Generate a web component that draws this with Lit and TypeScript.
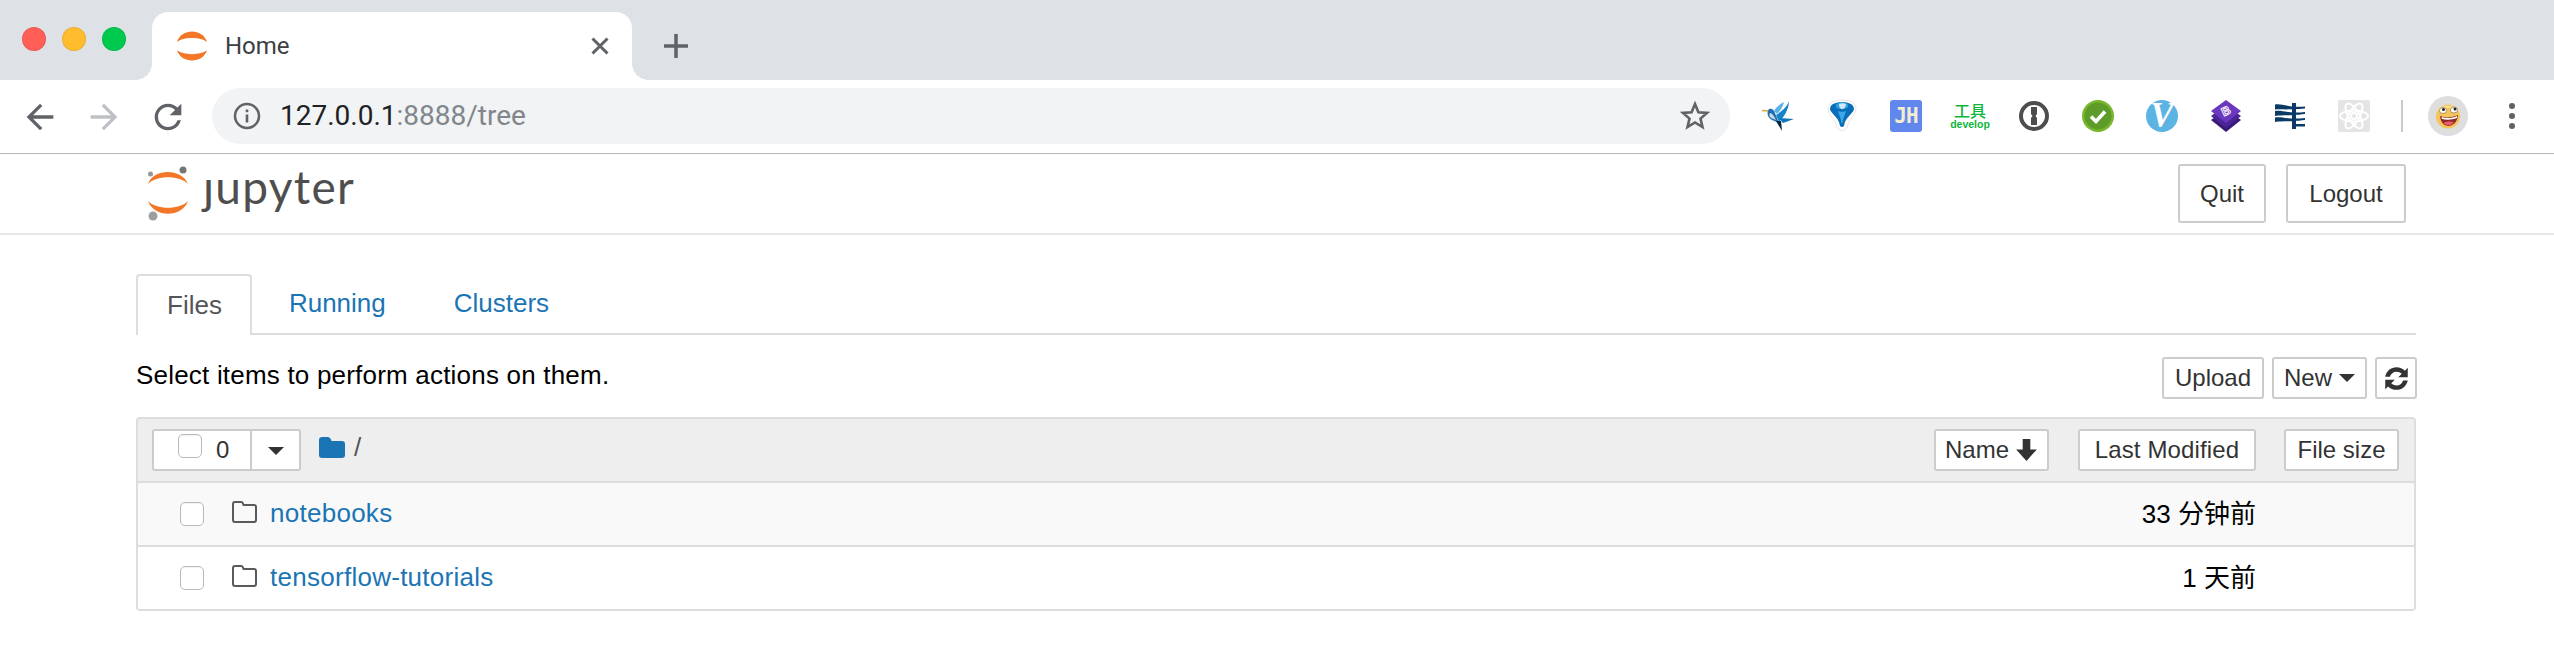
import { LitElement, html, css, svg } from "lit";
import { customElement } from "lit/decorators.js";

const arrow = "M20 11H7.83l5.59-5.59L12 4l-8 8 8 8 1.41-1.41L7.83 13H20v-2z";
const reload = "M17.65 6.35A7.958 7.958 0 0 0 12 4c-4.42 0-7.99 3.58-7.99 8s3.57 8 7.99 8c3.73 0 6.84-2.55 7.73-6h-2.08A5.99 5.99 0 0 1 12 18c-3.31 0-6-2.69-6-6s2.69-6 6-6c1.66 0 3.14.69 4.22 1.78L13 11h7V4l-2.35 2.35z";

const arcs = svg`<path d="M1 11C5 -3 27 -3 31 11C25 5.500 7 5.500 1 11Z" fill="#f37726"/><path d="M1 19C5 33 27 33 31 19C25 24.500 7 24.500 1 19Z" fill="#f37726"/>`;

const bird = html`<svg width="32" height="30" viewBox="0 0 32 30">
  <path d="M0 9.500L7 10" stroke="#d9a441" stroke-width="1.500"/>
  <path d="M7 8c3-1 5 1 6 4l4 10-7-3C6 17 4 12 7 8Z" fill="#1f6fb0"/>
  <path d="M8 12c2 0 4 3 6 7l-5-2c-2-2-2-3-1-5Z" fill="#c8d6df"/>
  <path d="M27 0C25 6 20 10 14 14l3 7C22 16 27 8 27 0Z" fill="#1483c9"/>
  <path d="M22 1c-4 2-8 5-10 9l3 3c3-3 6-7 7-12Z" fill="#5bb2e6"/>
  <path d="M17 17l15 1-11 4Z" fill="#0d77b8"/>
  <path d="M14 20l6 10 -1-10Z" fill="#06263f"/>
</svg>`;

const balloon = html`<svg width="30" height="34" viewBox="0 0 30 34">
  <path d="M15 1C23 1 29 4 29 10C29 16 21 20 20 29Q15 34 10 29C9 20 1 16 1 10C1 4 7 1 15 1Z" fill="#fff" stroke="#e6e6e6"/>
  <path d="M15 3C21 3 27 5 27 10C27 14 18 18 17 27Q15 29 13 27C12 18 3 14 3 10C3 5 9 3 15 3Z" fill="#0a6fb8"/>
  <path d="M15 3C19 3 22 5 21 8C19 11 11 11 9 8C8 5 11 3 15 3Z" fill="#2f9fe4"/>
  <path d="M12 5C14 4 17 4 19 5C19 9 16 10 15 10C14 10 12 9 12 5Z" fill="#cfe9fa"/>
  <path d="M11 12C13 13 17 13 19 12C18 16 16 19 15.500 24L14.500 24C14 19 12 16 11 12Z" fill="#3fa7e6"/>
</svg>`;

const onepass = html`<svg width="30" height="30" viewBox="0 0 30 30">
  <circle cx="15" cy="15" r="13" fill="#fff" stroke="#4d4d4d" stroke-width="4"/>
  <path d="M12 6h6v7l-1.500 2 1.500 2v7h-6v-7l1.500-2-1.500-2z" fill="#4d4d4d"/>
</svg>`;

const check = html`<svg width="32" height="32" viewBox="0 0 32 32">
  <circle cx="16" cy="16" r="16" fill="#79b72b"/>
  <circle cx="16" cy="16" r="13.500" fill="#5d9c29"/>
  <path d="M9 16.500l5 5 9-10" fill="none" stroke="#fff" stroke-width="3.600"/>
</svg>`;

const boot = html`<svg width="32" height="32" viewBox="0 0 32 32">
  <path d="M16 9L31 20L16 32L1 20Z" fill="#3a1a78"/>
  <path d="M16 5L31 16L16 28L1 16Z" fill="#4b2597"/>
  <path d="M16 0L31 11L16 23L1 11Z" fill="#6a38bd"/>
  <text x="16" y="15" class="bootb" transform="rotate(-25 16 11)">B</text>
</svg>`;

const lines = html`<svg width="30" height="26" viewBox="0 0 30 26">
  <g fill="#0b3a66">
    <path d="M0 1.500C7 0 13 5 30 3.500V5.500C13 7 7 6 0 6.500Z"/>
    <path d="M0 8C7 6.500 13 11 30 9V11C13 13 7 12 0 13Z"/>
    <path d="M0 14.500C7 13 13 17 30 15V17C13 19 7 18 0 19Z"/>
    <rect x="17" y="21" width="13" height="2.500"/>
    <rect x="17" y="0" width="4" height="26"/>
  </g>
</svg>`;

const react = html`<svg width="32" height="32" viewBox="0 0 32 32">
  <rect width="32" height="32" rx="2" fill="#e4e4e4"/>
  <g fill="none" stroke="#fff" stroke-width="2">
    <ellipse cx="16" cy="16" rx="14" ry="5.500"/>
    <ellipse cx="16" cy="16" rx="14" ry="5.500" transform="rotate(60 16 16)"/>
    <ellipse cx="16" cy="16" rx="14" ry="5.500" transform="rotate(120 16 16)"/>
    <circle cx="16" cy="16" r="3"/>
  </g>
</svg>`;

const face = html`<svg width="40" height="40" viewBox="0 0 40 40">
  <circle cx="20" cy="20" r="20" fill="#dedede"/>
  <circle cx="20" cy="20.500" r="12" fill="#f4c65a"/>
  <path d="M9 15C11 8 29 8 31 15C26 11 14 11 9 15Z" fill="#f9df93"/>
  <ellipse cx="15" cy="14.500" rx="3.600" ry="3" fill="#fff" stroke="#7a5a20" stroke-width=".6"/>
  <ellipse cx="26" cy="14" rx="3.600" ry="3" fill="#fff" stroke="#7a5a20" stroke-width=".6"/>
  <circle cx="15.500" cy="13.500" r="1.500" fill="#222"/>
  <circle cx="27" cy="13" r="1.500" fill="#222"/>
  <path d="M12 20C17 22 24 22 30 19C29.500 26 25 30 20.500 30C16 30 12.500 26 12 20Z" fill="#8e2a2a"/>
  <path d="M13.500 21C18 22.500 24 22.500 29 20V22C24 24 18 24 14 23Z" fill="#fff"/>
  <path d="M15.500 27C18 25 23 25 26 26.500C23 30 18 30 15.500 27Z" fill="#ec5a6a"/>
</svg>`;

const folderOutline = html`<svg class="folder" width="25" height="22" viewBox="0 0 25 22">
  <path d="M1 3Q1 1 3 1H9Q10.500 1 11 2.500L11.500 4H22Q24 4 24 6V19Q24 21 22 21H3Q1 21 1 19Z" fill="none" stroke="#5a5a5a" stroke-width="2"/>
</svg>`;

@customElement("app-root")
export class AppRoot extends LitElement {
  static styles = css`
    :host { display: block; width: 2554px; height: 662px; background: #fff; overflow: hidden; font-family: "Liberation Sans", Arial, sans-serif; font-size: 26px; color: #000; }
    * { box-sizing: border-box; }
    svg { display: block; flex: none; }
    .strip { height: 80px; background: #dee1e6; display: flex; align-items: flex-start; }
    .lights { display: flex; gap: 16px; padding: 27px 0 0 22px; width: 152px; flex: none; }
    .light { width: 24px; height: 24px; border-radius: 50%; border: 1px solid rgba(0,0,0,.08); }
    .red { background: #ff5f57; }
    .yellow { background: #ffbd2e; }
    .green { background: #00ca4e; }
    .tab { position: relative; margin-top: 12px; width: 480px; height: 68px; background: #fff; border-radius: 16px 16px 0 0; display: flex; align-items: center; padding: 0 23px 0 24px; }
    .tab::before, .tab::after { content: ""; position: absolute; bottom: 0; width: 16px; height: 16px; }
    .tab::before { left: -16px; background: radial-gradient(circle at 0 0, #dee1e6 15.500px, #fff 16px); }
    .tab::after { right: -16px; background: radial-gradient(circle at 100% 0, #dee1e6 15.500px, #fff 16px); }
    .tab-title { font-family: Roboto, sans-serif; font-size: 24px; color: #3c4043; margin-left: 17px; flex: 1; }
    .plus { margin: 34px 0 0 32px; }
    .toolbar { height: 74px; background: #fff; display: flex; align-items: center; padding-left: 20px; border-bottom: 1px solid #b5b5b5; }
    .nav { width: 40px; height: 40px; margin-right: 24px; flex: none; }
    .flip { transform: scaleX(-1); }
    .omni { width: 1518px; height: 56px; border-radius: 28px; background: #f1f3f4; display: flex; align-items: center; padding: 0 20px 0 21px; flex: none; margin-top: -2px; }
    .url { flex: 1; margin-left: 19px; font-family: Roboto, sans-serif; font-size: 28px; color: #202124; }
    .url span { color: #80868b; }
    .exts { display: flex; align-items: center; margin-left: 16px; margin-top: -2px; }
    .ext { width: 64px; height: 40px; display: flex; align-items: center; justify-content: center; flex: none; }
    .jh { width: 32px; height: 32px; background: #5f87ee; border-radius: 3px; color: #f3ecd0; font: bold 21px "DejaVu Sans Mono", monospace; display: flex; align-items: center; justify-content: center; letter-spacing: -1px; }
    .dev { color: #0fb53c; display: flex; flex-direction: column; align-items: center; line-height: 1; font-family: "Noto Sans CJK SC", sans-serif; font-size: 16px; font-weight: 500; }
    .dev small { font: bold 10.500px/1 "Liberation Sans", sans-serif; margin-top: 1px; }
    .vee { width: 32px; height: 32px; border-radius: 50%; background: #5cb4e4; color: #fff; font: italic bold 35px/32px "Liberation Serif", serif; text-align: center; }
    .bootb { font: bold 12px "Liberation Sans", sans-serif; fill: none; stroke: #fff; stroke-width: .9; text-anchor: middle; }
    .sep { width: 2px; height: 32px; background: #c9cbcd; margin-left: 15px; flex: none; }
    .avatar { margin-left: 25px; }
    .dots { margin-left: 41px; display: flex; flex-direction: column; gap: 4px; }
    .dots i { width: 6px; height: 6px; border-radius: 50%; background: #5f6368; display: block; }
    .header { height: 81px; display: flex; align-items: flex-start; justify-content: space-between; padding: 10px 148px 0 147px; border-bottom: 2px solid #e7e7e7; }
    .logo { display: flex; align-items: flex-start; position: relative; height: 60px; margin-top: 2px; }
    .brand { font-family: Lato, sans-serif; font-size: 46px; line-height: 44px; color: #4e4e4e; margin: -1px 0 0 14px; letter-spacing: 1.300px; }
    .hbtns { display: flex; gap: 20px; }
    .btn { background: #fff; border: 2px solid #ccc; border-radius: 3px; font-size: 24px; color: #333; display: flex; align-items: center; justify-content: center; white-space: nowrap; flex: none; height: 42px; }
    .big { height: 59px; }
    .main { padding: 39px 138px 0 136px; }
    .tabs { display: flex; height: 61px; border-bottom: 2px solid #ddd; }
    .t { color: #1b75b4; padding: 0 32px; margin-right: 4px; display: flex; align-items: center; height: 59px; }
    .t.active { color: #555; background: #fff; border: 2px solid #ddd; border-bottom: 0; height: 61px; border-radius: 4px 4px 0 0; padding: 0 28px 0 29px; margin-right: 5px; }
    .bar { display: flex; justify-content: space-between; align-items: flex-start; margin-top: 22px; margin-right: -1px; }
    .bar p { margin: 3px 0 0; line-height: 30px; letter-spacing: .2px; }
    .barbtns { display: flex; gap: 8px; }
    .caret { width: 0; height: 0; border: 8px solid transparent; border-top-color: #333; border-bottom: 0; display: inline-block; flex: none; }
    .list { margin-top: 18px; border: 2px solid #ddd; border-radius: 4px; }
    .lhead { height: 64px; background: #eee; border-bottom: 2px solid #ddd; display: flex; align-items: center; padding: 0 15px 0 14px; }
    .group { display: flex; height: 42px; border: 2px solid #ccc; background: #fff; border-radius: 3px; flex: none; }
    .g1 { width: 98px; display: flex; align-items: center; padding-left: 24px; border-right: 2px solid #ccc; }
    .g2 { width: 47px; display: flex; align-items: center; justify-content: center; padding-top: 2px; }
    .cb { width: 24px; height: 24px; border: 1px solid #b9b9b9; border-radius: 5px; background: #fff; box-shadow: inset 0 1px 1px rgba(0,0,0,.05); flex: none; }
    .g1 .cb { margin-top: -9px; }
    .g1 b { font-weight: 400; font-size: 24px; color: #333; margin-left: 14px; }
    .crumb { display: flex; align-items: center; margin: -5px 0 0 18px; flex: 1; }
    .crumb span { color: #555; margin-left: 9px; }
    .cols { display: flex; }
    .lm { letter-spacing: .15px; }
    .row { height: 64px; display: flex; align-items: center; padding-left: 42px; border-bottom: 2px solid #ddd; }
    .row:last-child { height: 62px; border-bottom: 0; background: #fff; }
    .odd { background: #f9f9f9; }
    .row .folder { margin: -5px 0 0 28px; }
    .row a { color: #1b75b4; margin-left: 13px; flex: 1; margin-top: -1px; letter-spacing: .27px; }
    .row time { margin-right: 158px; color: #000; margin-top: -5px; font-family: "Liberation Sans", "Noto Sans CJK SC", sans-serif; }
  `;

  render() {
    return html`
      <div class="strip">
        <div class="lights"><i class="light red"></i><i class="light yellow"></i><i class="light green"></i></div>
        <div class="tab">
          <svg width="32" height="30" viewBox="0 0 32 30">${arcs}</svg>
          <span class="tab-title">Home</span>
          <svg width="18" height="18" viewBox="0 0 18 18"><path d="M1.500 1.500L16.500 16.500M16.500 1.500L1.500 16.500" stroke="#5f6368" stroke-width="3"/></svg>
        </div>
        <svg class="plus" width="24" height="24" viewBox="0 0 24 24"><path d="M12 0V24M0 12H24" stroke="#5f6368" stroke-width="3.500"/></svg>
      </div>
      <div class="toolbar">
        <svg class="nav" viewBox="0 0 24 24"><path d=${arrow} fill="#5f6368"/></svg>
        <svg class="nav flip" viewBox="0 0 24 24"><path d=${arrow} fill="#bdc1c6"/></svg>
        <svg class="nav" viewBox="0 0 24 24"><path d=${reload} fill="#5f6368"/></svg>
        <div class="omni">
          <svg width="28" height="28" viewBox="0 0 28 28"><circle cx="14" cy="14" r="12" fill="none" stroke="#5f6368" stroke-width="2.500"/><path d="M12.700 12.500h2.600v8h-2.600zM12.700 7.500h2.600v2.700h-2.600z" fill="#5f6368"/></svg>
          <div class="url">127.0.0.1<span>:8888/tree</span></div>
          <svg width="30" height="29" viewBox="0 0 30 29"><path d="M15 3l3.400 8.200 8.600.700-6.500 5.700 2 8.500L15 21.500l-7.500 4.600 2-8.500L3 11.900l8.600-.700z" fill="none" stroke="#5f6368" stroke-width="2.600"/></svg>
        </div>
        <div class="exts">
          <div class="ext">${bird}</div>
          <div class="ext">${balloon}</div>
          <div class="ext"><div class="jh">JH</div></div>
          <div class="ext"><div class="dev">工具<small>develop</small></div></div>
          <div class="ext">${onepass}</div>
          <div class="ext">${check}</div>
          <div class="ext"><div class="vee">V</div></div>
          <div class="ext">${boot}</div>
          <div class="ext">${lines}</div>
          <div class="ext">${react}</div>
          <div class="sep"></div>
          <div class="avatar">${face}</div>
          <div class="dots"><i></i><i></i><i></i></div>
        </div>
      </div>
      <div class="header">
        <div class="logo">
          <svg width="42" height="56" viewBox="0 0 42 56">
            <circle cx="36" cy="4" r="3.500" fill="#767677"/>
            <circle cx="3.500" cy="8" r="2.500" fill="#989798"/>
            <circle cx="6" cy="50" r="4.500" fill="#9e9e9e"/>
            <path d="M1 18C6 2 35 2 41 18C33 9 9 9 1 18Z" fill="#f37726"/>
            <path d="M1 35C7 52 35 52 41 35C33 44 9 44 1 35Z" fill="#f37726"/>
          </svg>
          <span class="brand">ȷupyter</span>
        </div>
        <div class="hbtns">
          <div class="btn big" style="width:88px">Quit</div>
          <div class="btn big" style="width:120px">Logout</div>
        </div>
      </div>
      <div class="main">
        <div class="tabs">
          <div class="t active">Files</div>
          <div class="t">Running</div>
          <div class="t">Clusters</div>
        </div>
        <div class="bar">
          <p>Select items to perform actions on them.</p>
          <div class="barbtns">
            <div class="btn" style="width:102px">Upload</div>
            <div class="btn" style="width:95px;gap:7px">New <i class="caret"></i></div>
            <div class="btn" style="width:42px">
              <svg width="25" height="25" viewBox="2 2 20 20"><path d="M3 10.500C4 6 7.500 3 12 3c2.600 0 5 1 6.700 2.700L21 3.400V11h-7.600l2.800-2.800C15.100 7.100 13.600 6.500 12 6.500c-2.500 0-4.600 1.600-5.300 4zM21 13.500C20 18 16.500 21 12 21c-2.600 0-5-1-6.700-2.700L3 20.600V13h7.600l-2.800 2.800c1.100 1.100 2.600 1.700 4.200 1.700 2.500 0 4.600-1.600 5.300-4z" fill="#333"/></svg>
            </div>
          </div>
        </div>
        <div class="list">
          <div class="lhead">
            <div class="group">
              <div class="g1"><i class="cb"></i><b>0</b></div>
              <div class="g2"><i class="caret"></i></div>
            </div>
            <div class="crumb">
              <svg width="26" height="21" viewBox="0 0 26 21"><path d="M0 3Q0 0 3 0H9Q11 0 12 2.500L12.500 4H23Q26 4 26 7V18Q26 21 23 21H3Q0 21 0 18Z" fill="#1b75b4"/></svg>
              <span>/</span>
            </div>
            <div class="cols">
              <div class="btn" style="width:115px;gap:6px">Name
                <svg width="23" height="24" viewBox="0 0 21 22"><path d="M7 1h7v9.500h6L10.500 21 1 10.500h6z" fill="#333"/></svg>
              </div>
              <div class="btn lm" style="width:178px;margin-left:29px">Last Modified</div>
              <div class="btn" style="width:115px;margin-left:28px">File size</div>
            </div>
          </div>
          <div class="row odd">
            <i class="cb"></i>${folderOutline}<a>notebooks</a><time>33 分钟前</time>
          </div>
          <div class="row">
            <i class="cb"></i>${folderOutline}<a>tensorflow-tutorials</a><time>1 天前</time>
          </div>
        </div>
      </div>
    `;
  }
}
